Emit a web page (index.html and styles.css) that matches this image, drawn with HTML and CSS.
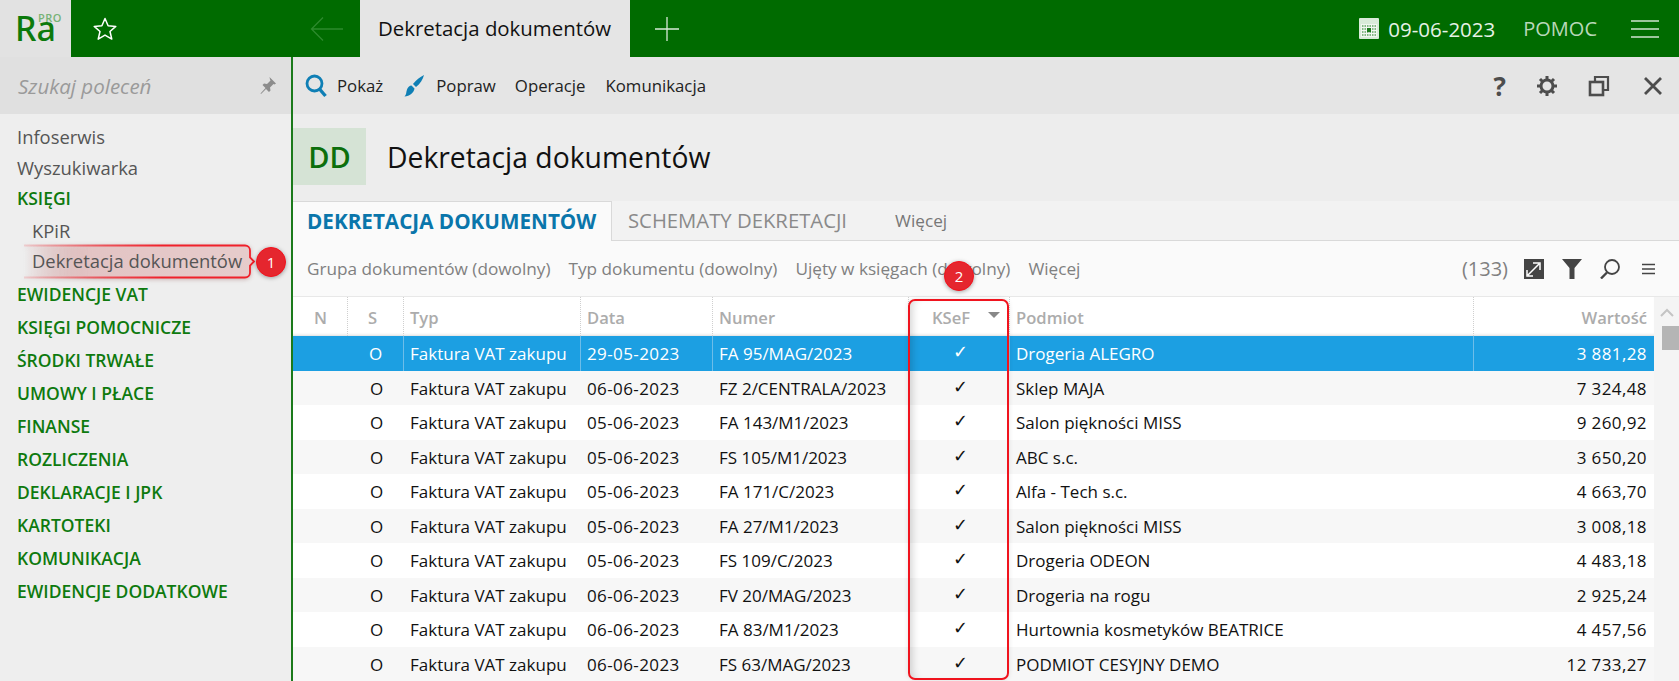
FILE: index.html
```html
<!DOCTYPE html>
<html lang="pl">
<head>
<meta charset="utf-8">
<title>Dekretacja dokumentów</title>
<link rel="stylesheet" href="styles.css">
</head>
<body>
<div class="page">
  <header class="topbar">
    <div class="logo"><span class="logo-ra">Ra</span><span class="logo-pro">PRO</span></div>
    <div class="star">
      <svg width="28" height="28" viewBox="0 0 28 28"><path d="M14 3.500l3.100 7.200 7.700.7-5.800 5.100 1.800 7.600L14 20.100l-6.800 4 1.800-7.600-5.800-5.100 7.700-.7z" fill="none" stroke="#fff" stroke-width="1.500" stroke-linejoin="round"/></svg>
    </div>
    <div class="back">
      <svg width="34" height="26" viewBox="0 0 34 26"><path d="M33 13H2M13 1.500L1.500 13 13 24.500" fill="none" stroke="#2d8a2d" stroke-width="1.300"/></svg>
    </div>
    <div class="doc-tab">Dekretacja dokumentów</div>
    <div class="plus">
      <svg width="26" height="26" viewBox="0 0 26 26"><path d="M13 1v24M1 13h24" stroke="#d8ead8" stroke-width="1.300" fill="none"/></svg>
    </div>
    <div class="top-right">
      <svg class="cal" width="20" height="21" viewBox="0 0 20 21"><rect width="20" height="21" rx="1" fill="#d9ebd9"/><rect x="2" y="6" width="16" height="13" fill="#f1f7f1"/><path d="M3 8h14M3 11h14M3 14h14M3 17h14" stroke="#1b7a1b" stroke-width="1.200" stroke-dasharray="1.500 1"/><rect x="8" y="10" width="4" height="4" fill="#1b7a1b"/></svg>
      <span class="date">09-06-2023</span>
      <span class="help">POMOC</span>
      <svg class="burger" width="28" height="18" viewBox="0 0 28 18"><path d="M0 1h28M0 9h28M0 17h28" stroke="#cfe3cf" stroke-width="1.500"/></svg>
    </div>
  </header>

  <div class="main">
    <aside class="side">
      <div class="search">
        <span class="search-text">Szukaj poleceń</span>
        <svg width="18" height="20" viewBox="0 0 18 20"><path d="M10.500 1L17 7.500l-1.500 1-1-.5-3.500 3.500.5 3-1.500 1.500-3-3L2 18l-.5-.5 5-5.500-3-3L5 7.500l3 .5L11.500 4.500l-.5-1z" fill="#8c8c8c"/></svg>
      </div>
      <nav class="nav">
        <a class="nav-link">Infoserwis</a>
        <a class="nav-link">Wyszukiwarka</a>
        <a class="nav-group first">KSIĘGI</a>
        <a class="nav-link sub">KPiR</a>
        <a class="nav-link sub marked">
          <svg class="mark" width="232" height="36" viewBox="0 0 232 36">
            <defs>
              <linearGradient id="markFill" x1="0" x2="1" y1="0" y2="0"><stop offset="0" stop-color="#e6bcbc" stop-opacity="0"/><stop offset=".3" stop-color="#e3c4c4"/><stop offset="1" stop-color="#e6cccc"/></linearGradient>
              <linearGradient id="markLine" x1="0" x2="1" y1="0" y2="0"><stop offset="0" stop-color="#f0202a" stop-opacity=".15"/><stop offset=".35" stop-color="#f0202a" stop-opacity=".7"/><stop offset=".6" stop-color="#f0202a"/></linearGradient>
            </defs>
            <path d="M0 1.500H221a5 5 0 0 1 5 5v7l4 4-4 4v7a5 5 0 0 1-5 5H0z" fill="url(#markFill)"/>
            <path d="M0 1.500H221a5 5 0 0 1 5 5v7l4 4-4 4v7a5 5 0 0 1-5 5H0" fill="none" stroke="url(#markLine)" stroke-width="1.800"/>
          </svg>
          <span class="nav-text">Dekretacja dokumentów</span>
          <span class="badge badge-one">1</span>
        </a>
        <a class="nav-group">EWIDENCJE VAT</a>
        <a class="nav-group">KSIĘGI POMOCNICZE</a>
        <a class="nav-group">ŚRODKI TRWAŁE</a>
        <a class="nav-group">UMOWY I PŁACE</a>
        <a class="nav-group">FINANSE</a>
        <a class="nav-group">ROZLICZENIA</a>
        <a class="nav-group">DEKLARACJE I JPK</a>
        <a class="nav-group">KARTOTEKI</a>
        <a class="nav-group">KOMUNIKACJA</a>
        <a class="nav-group">EWIDENCJE DODATKOWE</a>
      </nav>
    </aside>

    <section class="content">
      <div class="toolbar">
        <svg class="t-search" width="22" height="24" viewBox="0 0 22 24"><circle cx="9.500" cy="9.500" r="7.500" fill="none" stroke="#0f7fb5" stroke-width="2.800"/><path d="M14.500 15l6 7" stroke="#0f7fb5" stroke-width="3.400"/></svg>
        <span class="t-pokaz">Pokaż</span>
        <svg class="t-brush" width="22" height="24" viewBox="0 0 22 24"><path d="M21 1c-1 4-4 9-8 12l-3-3c3-4 7-7 11-9zM8.500 11.500l3 3c-.5 4-5 8-10 8 2-2 1.500-4 2.500-7 .7-2.300 2.500-4 4.500-4z" fill="#0f7fb5"/></svg>
        <span class="t-popraw">Popraw</span>
        <span class="t-oper">Operacje</span>
        <span class="t-kom">Komunikacja</span>
        <div class="t-right">
          <span class="q">?</span>
          <svg width="22" height="22" viewBox="0 0 22 22"><circle cx="11" cy="11" r="6" fill="none" stroke="#4d4d4d" stroke-width="3"/><path d="M11 1v4M11 17v4M1 11h4M17 11h4M4 4l3 3M15 15l3 3M18 4l-3 3M7 15l-3 3" stroke="#4d4d4d" stroke-width="3"/></svg>
          <svg width="22" height="22" viewBox="0 0 22 22"><path d="M7 6V2h13v13h-5" fill="none" stroke="#4d4d4d" stroke-width="2.200"/><rect x="2" y="7" width="13" height="13" fill="none" stroke="#4d4d4d" stroke-width="2.600"/></svg>
          <svg class="t-close" width="20" height="20" viewBox="0 0 20 20"><path d="M2 2l16 16M18 2L2 18" stroke="#4d4d4d" stroke-width="2.800"/></svg>
        </div>
      </div>

      <div class="title-row">
        <div class="dd">DD</div>
        <h1 class="title">Dekretacja dokumentów</h1>
      </div>

      <div class="tabs">
        <div class="tab active">DEKRETACJA DOKUMENTÓW</div>
        <div class="tab">SCHEMATY DEKRETACJI</div>
        <div class="tab-more">Więcej</div>
      </div>

      <div class="filters">
        <span class="f1">Grupa dokumentów (dowolny)</span>
        <span class="f2">Typ dokumentu (dowolny)</span>
        <span class="f3">Ujęty w księgach (dowolny)</span>
        <span class="f4">Więcej</span>
        <div class="f-right">
          <span class="count">(133)</span>
          <svg width="20" height="20" viewBox="0 0 20 20"><rect width="20" height="20" fill="#444"/><path d="M4 16L15 5M9 4h7v7M3 11v6h6" fill="none" stroke="#fff" stroke-width="1.500"/></svg>
          <svg width="20" height="20" viewBox="0 0 20 20"><path d="M0 0h20l-7.500 9V20h-5V9z" fill="#444"/></svg>
          <svg width="20" height="20" viewBox="0 0 20 20"><circle cx="12" cy="8" r="7" fill="none" stroke="#444" stroke-width="1.800"/><path d="M7 13.500L1 19.500" stroke="#444" stroke-width="2.400"/></svg>
          <svg class="f-lines" width="13" height="12" viewBox="0 0 13 12"><path d="M0 1.500h13M0 6h13M0 10.500h13" stroke="#444" stroke-width="1.500"/></svg>
        </div>
      </div>

      <div class="grid-wrap">
        <div class="grid">
          <div class="row head">
            <div class="c c-n">N</div><div class="c c-s">S</div><div class="c">Typ</div><div class="c">Data</div><div class="c">Numer</div>
            <div class="c c-k">KSeF<i class="caret"></i></div><div class="c">Podmiot</div><div class="c c-w">Wartość</div>
          </div>
          <div class="row sel"><div class="c"></div><div class="c c-s">O</div><div class="c">Faktura VAT zakupu</div><div class="c c-d">29-05-2023</div><div class="c">FA 95/MAG/2023</div><div class="c c-k">✓</div><div class="c">Drogeria ALEGRO</div><div class="c c-w">3 881,28</div></div>
          <div class="row alt"><div class="c"></div><div class="c c-s">O</div><div class="c">Faktura VAT zakupu</div><div class="c c-d">06-06-2023</div><div class="c">FZ 2/CENTRALA/2023</div><div class="c c-k">✓</div><div class="c">Sklep MAJA</div><div class="c c-w">7 324,48</div></div>
          <div class="row"><div class="c"></div><div class="c c-s">O</div><div class="c">Faktura VAT zakupu</div><div class="c c-d">05-06-2023</div><div class="c">FA 143/M1/2023</div><div class="c c-k">✓</div><div class="c">Salon piękności MISS</div><div class="c c-w">9 260,92</div></div>
          <div class="row alt"><div class="c"></div><div class="c c-s">O</div><div class="c">Faktura VAT zakupu</div><div class="c c-d">05-06-2023</div><div class="c">FS 105/M1/2023</div><div class="c c-k">✓</div><div class="c">ABC s.c.</div><div class="c c-w">3 650,20</div></div>
          <div class="row"><div class="c"></div><div class="c c-s">O</div><div class="c">Faktura VAT zakupu</div><div class="c c-d">05-06-2023</div><div class="c">FA 171/C/2023</div><div class="c c-k">✓</div><div class="c">Alfa - Tech s.c.</div><div class="c c-w">4 663,70</div></div>
          <div class="row alt"><div class="c"></div><div class="c c-s">O</div><div class="c">Faktura VAT zakupu</div><div class="c c-d">05-06-2023</div><div class="c">FA 27/M1/2023</div><div class="c c-k">✓</div><div class="c">Salon piękności MISS</div><div class="c c-w">3 008,18</div></div>
          <div class="row"><div class="c"></div><div class="c c-s">O</div><div class="c">Faktura VAT zakupu</div><div class="c c-d">05-06-2023</div><div class="c">FS 109/C/2023</div><div class="c c-k">✓</div><div class="c">Drogeria ODEON</div><div class="c c-w">4 483,18</div></div>
          <div class="row alt"><div class="c"></div><div class="c c-s">O</div><div class="c">Faktura VAT zakupu</div><div class="c c-d">06-06-2023</div><div class="c">FV 20/MAG/2023</div><div class="c c-k">✓</div><div class="c">Drogeria na rogu</div><div class="c c-w">2 925,24</div></div>
          <div class="row"><div class="c"></div><div class="c c-s">O</div><div class="c">Faktura VAT zakupu</div><div class="c c-d">06-06-2023</div><div class="c">FA 83/M1/2023</div><div class="c c-k">✓</div><div class="c">Hurtownia kosmetyków BEATRICE</div><div class="c c-w">4 457,56</div></div>
          <div class="row alt"><div class="c"></div><div class="c c-s">O</div><div class="c">Faktura VAT zakupu</div><div class="c c-d">06-06-2023</div><div class="c">FS 63/MAG/2023</div><div class="c c-k">✓</div><div class="c">PODMIOT CESYJNY DEMO</div><div class="c c-w">12 733,27</div></div>
        </div>
        <div class="scroll">
          <svg width="14" height="9" viewBox="0 0 14 9"><path d="M1 8l6-6 6 6" fill="none" stroke="#c4c4c4" stroke-width="2"/></svg>
          <div class="thumb"></div>
        </div>
      </div>
    </section>
  </div>

  <div class="ksef-box"></div>
  <span class="badge badge-two">2</span>
</div>
</body>
</html>
```
FILE: styles.css
```css
* { box-sizing: border-box; }
html, body { margin: 0; height: 681px; overflow: hidden; }
body { font-family: "Open Sans", "Noto Sans", sans-serif; font-size: 17px; color: #111; background: #fff; }
.page { position: relative; width: 1679px; height: 681px; display: flex; flex-direction: column; }

/* top bar */
.topbar { height: 57px; flex: none; background: #006b00; display: flex; align-items: center; }
.logo { width: 71px; height: 57px; background: #e2e2e2; position: relative; flex: none; }
.logo-ra { position: absolute; left: 15px; top: 22px; font-family: "Noto Sans", sans-serif; font-size: 34px; line-height: 12px; font-weight: 500; color: #0c7a0c; }
.logo-pro { position: absolute; left: 38px; top: 13px; font-size: 11px; line-height: 10px; font-weight: 600; color: #76b376; letter-spacing: .5px; }
.star { width: 28px; height: 28px; margin-left: 20px; flex: none; }
.back { margin-left: 191px; width: 50px; height: 26px; flex: none; }
.doc-tab { width: 270px; height: 57px; flex: none; background: #e5e5e5; color: #111; font-size: 20.400px; font-weight: 500; line-height: 57px; padding-left: 18px; white-space: nowrap; }
.plus { margin-left: 24px; width: 26px; height: 26px; flex: none; }
.top-right { margin-left: auto; display: flex; align-items: center; color: #d9ebd9; padding-right: 20px; }
.cal { margin-right: 9px; }
.date { font-size: 20.500px; color: #e6f2e6; margin-right: 28px; }
.help { font-size: 20px; color: #b9d8b9; margin-right: 34px; }

/* main */
.main { flex: 1; display: flex; min-height: 0; }
.side { width: 293px; flex: none; background: #eeeeee; border-right: 2px solid #1b7a1b; display: flex; flex-direction: column; }
.search { height: 57px; flex: none; background: #e0e0e0; display: flex; align-items: center; justify-content: space-between; padding: 0 14px 0 18px; }
.search-text { font-style: italic; font-size: 20.500px; color: #9a9a9a; }
.nav { display: flex; flex-direction: column; padding-top: 7px; }
.nav-link { height: 31px; line-height: 31px; padding-left: 17px; color: #555; font-size: 18.400px; position: relative; white-space: nowrap; }
.nav-link.sub { padding-left: 32px; }
.nav-group { height: 33px; line-height: 33px; padding-left: 17px; color: #0e7a0e; font-size: 17.500px; font-weight: 600; white-space: nowrap; }
.nav-group.first { height: 31px; line-height: 31px; margin-bottom: 1px; }
.marked { margin-bottom: 1px; line-height: 29px; }
.nav-text { position: relative; }
.mark { position: absolute; left: 24px; top: -2px; filter: drop-shadow(0 1px 2px rgba(120,40,40,.3)); }
.badge { position: absolute; display: flex; align-items: center; justify-content: center; border-radius: 50%; background: #e5262e; border: 1px solid #f5101c; color: #fff; font-size: 15px; line-height: 1; box-shadow: 0 1px 4px rgba(0,0,0,.35); }
.badge-one { left: 256px; top: 1px; width: 30px; height: 30px; }
.badge-two { left: 944px; top: 261px; width: 30px; height: 30px; }

/* content */
.content { flex: 1; min-width: 0; display: flex; flex-direction: column; background: #f2f2f2; }
.toolbar { height: 57px; flex: none; background: #e5e5e5; display: flex; align-items: center; padding-left: 12px; font-size: 16.800px; color: #222; }
.t-pokaz { margin-left: 10px; }
.t-brush { margin-left: 20px; }
.t-popraw { margin-left: 11px; }
.t-oper { margin-left: 19px; }
.t-kom { margin-left: 20px; }
.t-right { margin-left: auto; display: flex; align-items: center; gap: 30px; padding-right: 16px; }
.t-close { margin-left: 3px; }
.q { font-size: 26px; font-weight: 700; color: #4d4d4d; line-height: 24px; }
.title-row { height: 87px; flex: none; background: #ededed; display: flex; align-items: center; padding-bottom: 2px; }
.dd { width: 73px; height: 57px; background: #d5e3d5; color: #0c6f0c; font-size: 29px; font-weight: 600; line-height: 57px; text-align: center; }
.title { margin: 0 0 0 21px; font-size: 28.300px; font-weight: 400; color: #111; }
.tabs { height: 40px; flex: none; background: #f2f2f2; border-bottom: 1px solid #d9d9d9; display: flex; }
.tab { height: 40px; line-height: 39px; color: #8a8a8a; font-size: 20.300px; padding: 0 16px; white-space: nowrap; }
.tab.active { background: #fafafa; border: 1px solid #d9d9d9; border-bottom: 0; border-left: 0; color: #0a76ab; font-weight: 700; font-size: 20.700px; padding: 0 14px; width: 319px; overflow: hidden; }
.tab-more { color: #777; font-size: 17.200px; line-height: 40px; margin-left: 32px; }
.filters { height: 56px; flex: none; background: #fafafa; border-bottom: 1px solid #e8e8e8; display: flex; align-items: center; padding-left: 14px; color: #808080; font-size: 17.200px; white-space: nowrap; }
.f2, .f3, .f4 { margin-left: 18px; }
.f-right { margin-left: auto; display: flex; align-items: center; padding-right: 24px; gap: 18px; }
.f-lines { margin-left: 4px; }
.count { font-size: 20px; color: #808080; margin-right: -2px; }

/* table */
.grid-wrap { flex: 1; min-height: 0; display: flex; background: #fff; }
.grid { width: 1361px; flex: none; }
.row { display: grid; grid-template-columns: 54px 56px 177px 132px 196px 101px 464px 181px; height: 34.500px; align-items: stretch; line-height: 36px; white-space: nowrap; font-size: 17px; background: #fff; color: #111; }
.row.alt { background: #f7f7f7; }
.row.sel { background: #1c9fe2; color: #fff; }
.row.sel .c + .c { border-left: 1px solid #6dbde9; }
.row.sel .c:nth-child(2) { border-left: 0; }
.row.head { height: 39px; line-height: 41px; color: #acacac; font-weight: 600; font-size: 16.600px; box-shadow: inset 0 -3px 3px -2px #dcdcdc; }
.row.head .c + .c { border-left: 1px dotted #cfcfcf; }
.c { padding-left: 6px; padding-right: 6px; border-left: 1px solid transparent; position: relative; overflow: hidden; }
.c-n { padding-left: 20px; }
.c-s { padding-left: 22px; }
.c-d { letter-spacing: .4px; }
.row.head .c-s { padding-left: 20px; }
.c-k { text-align: center; padding: 0 0 0 3px; font-size: 18px; line-height: 30px; }
.row.head .c-k { padding: 0 16px 0 0; font-size: 16.600px; line-height: 41px; }
.caret { position: absolute; right: 9px; top: 15px; border: 6px solid transparent; border-top: 6px solid #888; border-bottom: 0; }
.c-w { text-align: right; padding-right: 7px; letter-spacing: .4px; }
.row.head .c-w { letter-spacing: 0; }
.scroll { flex: 1; background: #f4f4f4; display: flex; flex-direction: column; align-items: center; padding-top: 11px; }
.thumb { width: 17px; height: 24px; background: #b5b5b5; margin: 9px 0 0 8px; }

/* annotation */
.ksef-box { position: absolute; left: 908px; top: 299px; width: 101px; height: 381px; border: 2px solid #f0141e; border-radius: 7px; box-shadow: inset 8px 0 8px -6px rgba(0,0,0,.18), 0 0 5px rgba(0,0,0,.1); pointer-events: none; }
```
